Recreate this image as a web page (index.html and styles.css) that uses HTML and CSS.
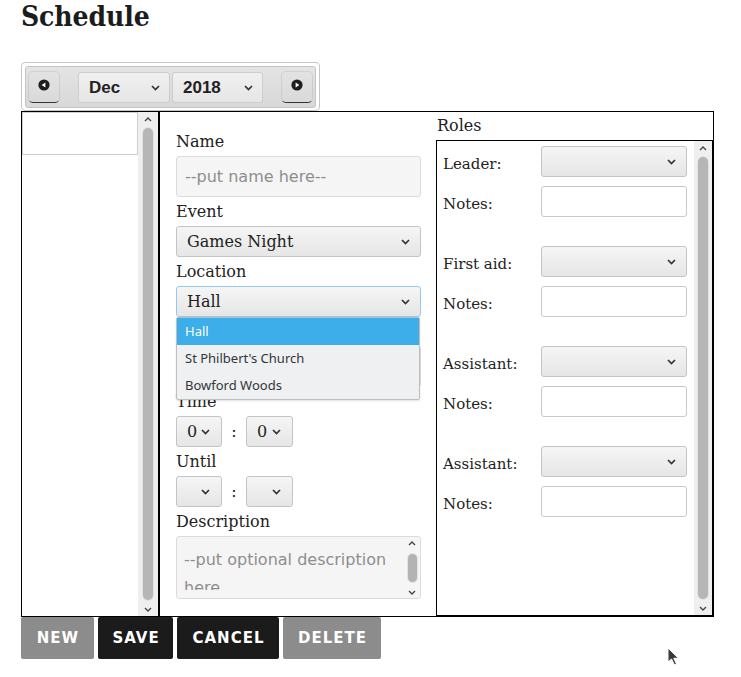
FILE: index.html
```html
<!DOCTYPE html>
<html>
<head>
<meta charset="utf-8">
<title>Schedule</title>
<link rel="stylesheet" href="styles.css">
</head>
<body>
<div class="page">
  <h1 class="title">Schedule</h1>

  <div class="monthnav">
    <div class="monthnav-bar">
      <div class="nav-btn">
        <svg width="12" height="12" viewBox="0 0 12 12"><circle cx="6" cy="6" r="5.6" fill="#1e1e1e"/><path d="M3.6 6 L7.4 3.4 L7.4 8.6 Z" fill="#fff"/></svg>
      </div>
      <div class="nav-selects">
        <div class="sel sel-nav sel-month"><span>Dec</span><svg class="chev" width="9" height="6" viewBox="0 0 9 6"><path d="M1 1 L4.5 4.5 L8 1" fill="none" stroke="#333" stroke-width="1.7"/></svg></div>
        <div class="sel sel-nav sel-year"><span>2018</span><svg class="chev" width="9" height="6" viewBox="0 0 9 6"><path d="M1 1 L4.5 4.5 L8 1" fill="none" stroke="#333" stroke-width="1.7"/></svg></div>
      </div>
      <div class="nav-btn">
        <svg width="12" height="12" viewBox="0 0 12 12"><circle cx="6" cy="6" r="5.6" fill="#1e1e1e"/><path d="M8.4 6 L4.6 3.4 L4.6 8.6 Z" fill="#fff"/></svg>
      </div>
    </div>
  </div>

  <div class="frame">
    <div class="list-col">
      <div class="list">
        <div class="list-item"></div>
      </div>
      <div class="sb">
        <div class="sb-arrow"><svg width="8" height="5" viewBox="0 0 8 5"><path d="M1 4 L4 1 L7 4" fill="none" stroke="#444" stroke-width="1.4"/></svg></div>
        <div class="sb-thumb"></div>
        <div class="sb-arrow"><svg width="8" height="5" viewBox="0 0 8 5"><path d="M1 1 L4 4 L7 1" fill="none" stroke="#444" stroke-width="1.4"/></svg></div>
      </div>
    </div>

    <div class="form-col">
      <label class="field-label">Name</label>
      <input class="text-input" type="text" placeholder="--put name here--">

      <label class="field-label">Event</label>
      <div class="sel sel-field"><span>Games Night</span><svg class="chev" width="9" height="6" viewBox="0 0 9 6"><path d="M1 1 L4.5 4.5 L8 1" fill="none" stroke="#333" stroke-width="1.7"/></svg></div>

      <label class="field-label">Location</label>
      <div class="location">
        <div class="sel sel-field sel-focus"><span>Hall</span><svg class="chev" width="9" height="6" viewBox="0 0 9 6"><path d="M1 1 L4.5 4.5 L8 1" fill="none" stroke="#333" stroke-width="1.7"/></svg></div>
        <ul class="popup">
          <li class="opt opt-selected">Hall</li>
          <li class="opt">St Philbert's Church</li>
          <li class="opt">Bowford Woods</li>
        </ul>
      </div>

      <label class="field-label">Date</label>
      <input class="text-input" type="text">

      <label class="field-label">Time</label>
      <div class="time-row">
        <div class="sel sel-time"><span>0</span><svg class="chev" width="9" height="6" viewBox="0 0 9 6"><path d="M1 1 L4.5 4.5 L8 1" fill="none" stroke="#333" stroke-width="1.7"/></svg></div>
        <span class="colon">:</span>
        <div class="sel sel-time sel-time2"><span>0</span><svg class="chev" width="9" height="6" viewBox="0 0 9 6"><path d="M1 1 L4.5 4.5 L8 1" fill="none" stroke="#333" stroke-width="1.7"/></svg></div>
      </div>

      <label class="field-label">Until</label>
      <div class="time-row">
        <div class="sel sel-time sel-empty"><svg class="chev" width="9" height="6" viewBox="0 0 9 6"><path d="M1 1 L4.5 4.5 L8 1" fill="none" stroke="#333" stroke-width="1.7"/></svg></div>
        <span class="colon">:</span>
        <div class="sel sel-time sel-time2 sel-empty"><svg class="chev" width="9" height="6" viewBox="0 0 9 6"><path d="M1 1 L4.5 4.5 L8 1" fill="none" stroke="#333" stroke-width="1.7"/></svg></div>
      </div>

      <label class="field-label">Description</label>
      <div class="textarea">
        <div class="ta-text">--put optional description here</div>
        <div class="sb sb-sm">
          <div class="sb-arrow"><svg width="8" height="5" viewBox="0 0 8 5"><path d="M1 4 L4 1 L7 4" fill="none" stroke="#444" stroke-width="1.4"/></svg></div>
          <div class="sb-thumb"></div>
          <div class="sb-arrow"><svg width="8" height="5" viewBox="0 0 8 5"><path d="M1 1 L4 4 L7 1" fill="none" stroke="#444" stroke-width="1.4"/></svg></div>
        </div>
      </div>
    </div>

    <div class="roles-col">
      <div class="roles-label">Roles</div>
      <div class="roles-box">
        <div class="roles-list">
          <div class="role">
            <span class="role-label">Leader:</span>
            <div class="sel sel-role"><svg class="chev" width="9" height="6" viewBox="0 0 9 6"><path d="M1 1 L4.5 4.5 L8 1" fill="none" stroke="#333" stroke-width="1.7"/></svg></div>
            <span class="role-label">Notes:</span>
            <div class="notes"></div>
          </div>
          <div class="role">
            <span class="role-label">First aid:</span>
            <div class="sel sel-role"><svg class="chev" width="9" height="6" viewBox="0 0 9 6"><path d="M1 1 L4.5 4.5 L8 1" fill="none" stroke="#333" stroke-width="1.7"/></svg></div>
            <span class="role-label">Notes:</span>
            <div class="notes"></div>
          </div>
          <div class="role">
            <span class="role-label">Assistant:</span>
            <div class="sel sel-role"><svg class="chev" width="9" height="6" viewBox="0 0 9 6"><path d="M1 1 L4.5 4.5 L8 1" fill="none" stroke="#333" stroke-width="1.7"/></svg></div>
            <span class="role-label">Notes:</span>
            <div class="notes"></div>
          </div>
          <div class="role">
            <span class="role-label">Assistant:</span>
            <div class="sel sel-role"><svg class="chev" width="9" height="6" viewBox="0 0 9 6"><path d="M1 1 L4.5 4.5 L8 1" fill="none" stroke="#333" stroke-width="1.7"/></svg></div>
            <span class="role-label">Notes:</span>
            <div class="notes"></div>
          </div>
        </div>
        <div class="sb sb-roles">
          <div class="sb-arrow"><svg width="8" height="5" viewBox="0 0 8 5"><path d="M1 4 L4 1 L7 4" fill="none" stroke="#444" stroke-width="1.4"/></svg></div>
          <div class="sb-thumb"></div>
          <div class="sb-arrow"><svg width="8" height="5" viewBox="0 0 8 5"><path d="M1 1 L4 4 L7 1" fill="none" stroke="#444" stroke-width="1.4"/></svg></div>
        </div>
      </div>
    </div>
  </div>

  <div class="actions">
    <button class="btn btn-muted btn-new">NEW</button>
    <button class="btn btn-dark btn-save">SAVE</button>
    <button class="btn btn-dark btn-cancel">CANCEL</button>
    <button class="btn btn-muted btn-delete">DELETE</button>
  </div>
</div>

<svg class="cursor" width="14" height="20" viewBox="0 0 14 20"><path d="M1 1 L1 15 L4.5 12 L7.5 18 L9.5 17 L6.8 11.3 L11.5 11.3 Z" fill="#3a3a3a" stroke="#fff" stroke-width="1"/></svg>
</body>
</html>
```

FILE: styles.css
```css
* { box-sizing: border-box; }

body {
  margin: 0;
  background: #fff;
  color: #222;
  font-family: "DejaVu Serif", serif;
}

.page {
  padding: 0 0 0 21px;
}

.title {
  margin: 0 0 28px 0;
  height: 34px;
  font: bold 28px/34px "DejaVu Serif Condensed", "DejaVu Serif", serif;
  letter-spacing: -0.1px;
  color: #1c1c1c;
}

/* month navigator */
.monthnav {
  width: 299px;
  height: 49px;
  border: 1px solid #c6c6c6;
  border-radius: 4px;
  padding: 3px 3px 2px 3px;
  background: #fff;
}

.monthnav-bar {
  height: 100%;
  border: 1px solid #c4c4c4;
  border-radius: 3px;
  background: linear-gradient(#e4e4e4, #d8d8d8);
  display: flex;
  align-items: center;
  justify-content: space-between;
  padding: 0 2px;
}

.nav-btn {
  width: 32px;
  height: 32px;
  border: 1px solid rgba(0, 0, 0, 0.08);
  border-bottom: 1px solid #333;
  border-radius: 5px;
  display: flex;
  align-items: center;
  justify-content: center;
  padding-bottom: 4px;
}

.nav-selects {
  display: flex;
  gap: 2px;
}

/* fake selects */
.sel {
  display: flex;
  align-items: center;
  justify-content: space-between;
  height: 31px;
  border: 1px solid #c4c4c4;
  border-radius: 3px;
  background: linear-gradient(#f5f5f5, #e6e6e6);
  padding: 0 10px;
  color: #222;
}

.sel-empty { justify-content: flex-end; }
.chev { flex: none; }

.sel-nav {
  height: 31px;
  font: bold 17px "Liberation Sans", Arial, sans-serif;
  color: #222;
  padding: 2px 9px 0 10px;
  border-color: #cdcdcd;
  background: linear-gradient(#f0f0f0, #e6e6e6);
}

.sel-month { width: 92px; }
.sel-year { width: 91px; }

/* main frame */
.frame {
  display: flex;
  width: 693px;
  height: 506px;
  border: 1px solid #000;
}

.list-col {
  width: 138px;
  border-right: 2px solid #000;
  display: flex;
}

.list { flex: 1; }

.list-item {
  height: 43px;
  border: 1px solid #cfcfcf;
}

/* fake scrollbars */
.sb {
  width: 20px;
  background: #efeff0;
  display: flex;
  flex-direction: column;
  align-items: center;
}

.sb-arrow {
  height: 14px;
  display: flex;
  align-items: center;
  justify-content: center;
  flex: none;
}

.sb-thumb {
  flex: 1;
  width: 10px;
  margin: 2px 0;
  border-radius: 5px;
  background: #b6b6b6;
  box-shadow: 0 0 0 1px #e3e3e3;
}

.sb-roles { width: 18px; }

.sb-sm {
  width: 16px;
  background: transparent;
}

.sb-sm .sb-arrow { height: 12px; }

.sb-sm .sb-thumb {
  flex: none;
  height: 28px;
  width: 9px;
  margin: 5px 0 auto 0;
  background: #b3b3b3;
}

/* form column */
.form-col {
  width: 276px;
  padding: 20px 0 0 16px;
}

.field-label {
  display: block;
  font: 16px/20px "DejaVu Serif", serif;
  color: #222;
  margin-bottom: 4px;
}

.text-input {
  display: block;
  width: 245px;
  height: 41px;
  margin: 0 0 5px 0;
  border: 1px solid #dcdcdc;
  border-radius: 3px;
  background: #f5f5f5;
  padding: 0 8px;
  font: 16px "DejaVu Sans", sans-serif;
  color: #333;
  outline: none;
}

.text-input::placeholder { color: #8e8e8e; }

.sel-field {
  width: 245px;
  margin-bottom: 5px;
  font: 16px "DejaVu Serif", serif;
}

.location {
  position: relative;
  width: 245px;
}

.sel-focus {
  border-color: #93c9ea;
}

.popup {
  position: absolute;
  left: 0;
  top: 31px;
  width: 244px;
  margin: 0;
  padding: 0;
  list-style: none;
  background: #eff0f1;
  border: 1px solid #bdbebf;
  border-radius: 2px;
  box-shadow: 0 1px 2px rgba(0, 0, 0, 0.12);
  z-index: 5;
}

.opt {
  height: 27px;
  padding-left: 8px;
  font: 13px/27px "Noto Sans", "Open Sans", sans-serif;
  color: #31363b;
}

.opt-selected {
  background: #3daee9;
  color: #fcfcfc;
}

.time-row {
  display: flex;
  align-items: center;
  margin-bottom: 5px;
}

.sel-time {
  width: 46px;
  font: 16px "DejaVu Serif", serif;
  padding: 0 11px 0 10px;
}

.sel-time2 { width: 47px; }

.colon {
  width: 24px;
  text-align: center;
  font: 16px "DejaVu Serif", serif;
}

.textarea {
  display: flex;
  width: 245px;
  height: 63px;
  border: 1px solid #dcdcdc;
  border-radius: 3px;
  background: #f5f5f5;
}

.ta-text {
  flex: 1;
  height: 53px;
  overflow: hidden;
  padding: 9px 0 0 7px;
  font: 16px/28px "DejaVu Sans", sans-serif;
  color: #8e8e8e;
}

/* roles */
.roles-col {
  flex: 1;
  display: flex;
  flex-direction: column;
}

.roles-label {
  height: 28px;
  line-height: 28px;
  padding-left: 1px;
  font-size: 16px;
  color: #222;
}

.roles-box {
  flex: 1;
  display: flex;
  border: 1px solid #000;
}

.roles-list {
  flex: 1;
  padding: 5px 0 0 6px;
  display: flex;
  flex-direction: column;
  gap: 29px;
}

.role {
  display: grid;
  grid-template-columns: 98px 146px;
  grid-template-rows: 31px 31px;
  row-gap: 9px;
  align-items: center;
}

.role-label {
  font: 15px/20px "DejaVu Serif", serif;
  color: #222;
  padding-top: 4px;
}

.sel-role {
  justify-content: flex-end;
  height: 31px;
}

.notes {
  height: 31px;
  border: 1px solid #c9c9c9;
  border-radius: 3px;
  background: #fff;
}

/* actions */
.actions {
  display: flex;
  gap: 4px;
}

.btn {
  height: 42px;
  border: 0;
  border-radius: 2px;
  padding: 0 0 0 1px;
  color: #fff;
  font: bold 15px "DejaVu Sans", sans-serif;
  letter-spacing: 1px;
  text-align: center;
}

.btn-new { width: 73px; }
.btn-save { width: 75px; }
.btn-cancel { width: 102px; }
.btn-delete { width: 98px; }

.btn-muted { background: #8c8c8c; }
.btn-dark { background: #1b1b1b; }

.cursor {
  position: absolute;
  left: 667px;
  top: 647px;
}
```
